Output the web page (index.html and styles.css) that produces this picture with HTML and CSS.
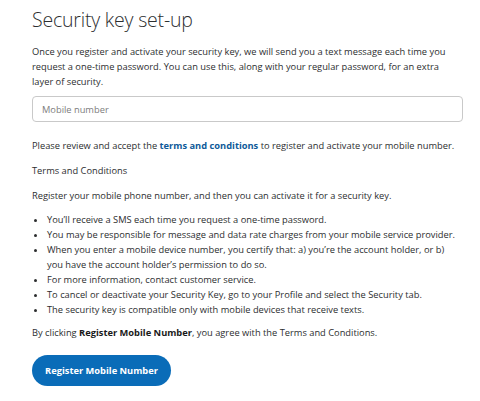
FILE: index.html
```html
<!DOCTYPE html>
<html>
<head>
<meta charset="utf-8">
<link rel="stylesheet" href="styles.css">
</head>
<body>
<main class="page">
  <h1 class="title">Security key set-up</h1>
  <p class="text intro">Once you register and activate your security key, we will send you a text message each time you request a one-time password. You can use this, along with your regular password, for an extra layer of security.</p>
  <div class="field"><input class="input" type="text" placeholder="Mobile number"></div>
  <p class="text review">Please review and accept the <a class="link" href="#">terms and conditions</a> to register and activate your mobile number.</p>
  <p class="text terms-head">Terms and Conditions</p>
  <p class="text reg">Register your mobile phone number, and then you can activate it for a security key.</p>
  <ul class="list">
    <li>You’ll receive a SMS each time you request a one-time password.</li>
    <li>You may be responsible for message and data rate charges from your mobile service provider.</li>
    <li>When you enter a mobile device number, you certify that: a) you’re the account holder, or b) you have the account holder’s permission to do so.</li>
    <li>For more information, contact customer service.</li>
    <li>To cancel or deactivate your Security Key, go to your Profile and select the Security tab.</li>
    <li>The security key is compatible only with mobile devices that receive texts.</li>
  </ul>
  <p class="text agree">By clicking <b>Register Mobile Number</b>, you agree with the Terms and Conditions.</p>
  <button class="btn" type="button">Register Mobile Number</button>
</main>
</body>
</html>
```
FILE: styles.css
```css
html, body {
  margin: 0;
  padding: 0;
  background: #ffffff;
}
.page {
  width: 431px;
  padding: 5px 0 0 32px;
  font-family: "Open Sans", "Noto Sans", sans-serif;
  color: #2c2e2f;
}
.title {
  margin: 0;
  font-size: 19.5px;
  font-weight: 300;
  line-height: 30px;
  letter-spacing: -0.2px;
}
.text {
  margin: 0;
  font-size: 9.3px;
  line-height: 15px;
}
.intro {
  margin-top: 9px;
  max-width: 420px;
}
.field { margin-top: 7px; }
.input {
  display: block;
  box-sizing: border-box;
  width: 431px;
  height: 26px;
  border: 1px solid #c9c9c9;
  border-radius: 4px;
  padding: 0 9px;
  font-family: inherit;
  font-size: 9.3px;
  color: #2c2e2f;
}
.input::placeholder { color: #7d7d7d; }
.review { margin-top: 16px; }
.terms-head { margin-top: 10px; }
.reg { margin-top: 10px; }
.link {
  color: #0e5a99;
  font-weight: 700;
  text-decoration: none;
}
.list {
  box-sizing: border-box;
  width: 428px;
  margin: 9px 0 0;
  padding: 0 0 0 15px;
  font-size: 9.3px;
  line-height: 15px;
}
.agree { margin-top: 8px; }
.agree b { font-weight: 700; color: #1a1a1a; }
.btn {
  display: block;
  margin-top: 15px;
  width: 139px;
  height: 31px;
  border: 0;
  border-radius: 16px;
  background: #0a6cb8;
  color: #ffffff;
  font-family: inherit;
  font-size: 9.3px;
  font-weight: 700;
  padding: 0;
}
```
